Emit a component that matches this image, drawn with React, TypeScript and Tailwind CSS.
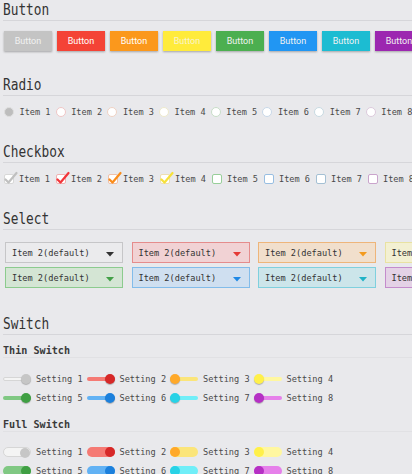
import React from "react";

type Tone = {
  solid: string;
  radioBorder: string;
  boxBorder: string;
  selectBg: string;
  selectBorder: string;
  arrow: string;
  knob: string;
  track: string;
};

const tones: Tone[] = [
  { solid: "bg-[#c4c4c4]", radioBorder: "border-[#d4d4d4]", boxBorder: "border-[#d8d8d8]", selectBg: "bg-[#ebebed]", selectBorder: "border-[#c6c6c8]", arrow: "#333333", knob: "bg-[#c6c6c6]", track: "bg-[#f4f4f4]" },
  { solid: "bg-[#f44336]", radioBorder: "border-[#efc6c6]", boxBorder: "border-[#efb2b2]", selectBg: "bg-[#f1d2d4]", selectBorder: "border-[#e58c8c]", arrow: "#e53935", knob: "bg-[#d62828]", track: "bg-[#f57a74]" },
  { solid: "bg-[#fb981c]", radioBorder: "border-[#efd2c4]", boxBorder: "border-[#efc0a8]", selectBg: "bg-[#f1dfcc]", selectBorder: "border-[#eeb57a]", arrow: "#f39a1e", knob: "bg-[#ffa92a]", track: "bg-[#fbe57a]" },
  { solid: "bg-[#ffeb3b]", radioBorder: "border-[#eeeacc]", boxBorder: "border-[#eedfb0]", selectBg: "bg-[#f3f0d2]", selectBorder: "border-[#e9e2a2]", arrow: "#f2dc2a", knob: "bg-[#fff04a]", track: "bg-[#fff7a0]" },
  { solid: "bg-[#4caf50]", radioBorder: "border-[#c8dec8]", boxBorder: "border-[#98cf9a]", selectBg: "bg-[#d4e5d4]", selectBorder: "border-[#8ccb8e]", arrow: "#43a047", knob: "bg-[#3f9f43]", track: "bg-[#80c883]" },
  { solid: "bg-[#2196f3]", radioBorder: "border-[#c8d8e8]", boxBorder: "border-[#98bee2]", selectBg: "bg-[#cfdff0]", selectBorder: "border-[#82bcea]", arrow: "#1e88e5", knob: "bg-[#1c80dc]", track: "bg-[#62b2f4]" },
  { solid: "bg-[#1cbcd2]", radioBorder: "border-[#c8dae2]", boxBorder: "border-[#a4c0d4]", selectBg: "bg-[#cce5ea]", selectBorder: "border-[#7fd0de]", arrow: "#1fb2c6", knob: "bg-[#28d2e6]", track: "bg-[#70eef8]" },
  { solid: "bg-[#9c27b0]", radioBorder: "border-[#dccadc]", boxBorder: "border-[#caa4cc]", selectBg: "bg-[#e4d2e6]", selectBorder: "border-[#c48ccc]", arrow: "#9c27b0", knob: "bg-[#b530c4]", track: "bg-[#e680ea]" },
];

const checkColors = ["#c0c0c0", "#f2353a", "#fa8c1a", "#f6e13a"];

const mono = "font-['DejaVu_Sans_Mono',monospace]";

const Heading = ({ children }: { children: string }) => (
  <div className="h-5 border-b border-[#d6d6da] box-content leading-5">
    <span className={`${mono} inline-block align-top origin-left scale-x-[0.8] text-[16px] leading-5 text-[#333] whitespace-nowrap`}>
      {children}
    </span>
  </div>
);

const SubHeading = ({ children }: { children: string }) => (
  <div className="h-[12px] border-b border-[#e1e1e4] box-content leading-[12px]">
    <span className={`${mono} inline-block align-top origin-left scale-x-[0.92] text-[11px] font-bold leading-[12px] text-[#3a3a3a] whitespace-nowrap`}>
      {children}
    </span>
  </div>
);

const Label = ({ children, className = "" }: { children: string; className?: string }) => (
  <span className={`${mono} block text-[8.6px] leading-[14px] text-[#4a4a4a] whitespace-nowrap ${className}`}>{children}</span>
);

const ThinSwitch = ({ tone, on }: { tone: Tone; on: boolean }) => (
  <div className="relative w-[28px] h-[14px] shrink-0 flex items-center">
    <div className={`w-full h-[4px] rounded-full ${tone.track} ${tone.track === "bg-[#f4f4f4]" ? "border border-[#d6d6d6]" : ""}`} />
    <div
      className={`absolute top-[2px] w-[10px] h-[10px] rounded-full shadow-[0_1px_1px_rgba(0,0,0,0.25)] ${tone.knob} ${on ? "right-0" : "left-0"}`}
    />
  </div>
);

const FullSwitch = ({ tone, on }: { tone: Tone; on: boolean }) => (
  <div
    className={`relative w-[28px] h-[10px] shrink-0 rounded-full ${tone.track} ${tone.track === "bg-[#f4f4f4]" ? "border border-[#d6d6d6]" : ""}`}
  >
    <div
      className={`absolute top-[0px] w-[10px] h-[10px] rounded-full ${tone.knob} ${on ? "right-0" : "left-0"}`}
    />
  </div>
);

const Select = ({ tone }: { tone: Tone }) => (
  <div className={`w-[118px] h-[21px] shrink-0 border ${tone.selectBg} ${tone.selectBorder} flex items-center pl-[6px] pr-[8px]`}>
    <span className={`${mono} text-[8.6px] leading-[14px] text-[#333] whitespace-nowrap`}>Item 2(default)</span>
    <svg className="ml-auto mt-[3px]" width="8" height="5" viewBox="0 0 8 5">
      <polygon points="0,0 8,0 4,4.5" fill={tone.arrow} />
    </svg>
  </div>
);

export default function App() {
  const buttonText = ["text-[#f2f2f2]", "text-white", "text-white", "text-[#f8f4d0]", "text-[#f2f2f2]", "text-[#f2f2f2]", "text-[#f2f2f2]", "text-[#f2f2f2]"];
  const switchOn = [true, true, false, false, true, true, false, false];

  return (
    <div className="w-[412px] h-[474px] overflow-hidden bg-[#e9e9ec] px-[3px]">
      <div className="w-[600px]">
        <Heading>Button</Heading>
        <div className="mt-[10px] flex gap-[5px] pl-px">
          {tones.map((t, i) => (
            <div
              key={i}
              className={`w-[48px] h-[20px] shrink-0 ${t.solid} flex items-center justify-center shadow-[0_1px_2px_rgba(0,0,0,0.3)]`}
            >
              <span className={`font-['Roboto',sans-serif] text-[9px] leading-[12px] ${buttonText[i]}`}>Button</span>
            </div>
          ))}
        </div>

        <div className="mt-[24px]">
          <Heading>Radio</Heading>
        </div>
        <div className="mt-[9px] flex h-[14px]">
          {tones.map((t, i) => (
            <div key={i} className="flex items-center w-[51.7px] shrink-0">
              <div
                className={`ml-px w-[10px] h-[10px] rounded-full border ${t.radioBorder} ${i === 0 ? "bg-[#bdbdbd] border-[#dedede]" : "bg-white"}`}
              />
              <Label className="ml-[5.5px]">{`Item ${i + 1}`}</Label>
            </div>
          ))}
        </div>

        <div className="mt-[23px]">
          <Heading>Checkbox</Heading>
        </div>
        <div className="mt-[9px] flex h-[14px]">
          {tones.map((t, i) => (
            <div key={i} className="flex items-center w-[52px] shrink-0">
              <div className={`relative ml-px w-[10px] h-[10px] rounded-[2px] border bg-white ${t.boxBorder}`}>
                {i < 4 && (
                  <svg className="absolute left-[-1px] top-[-4px]" width="14" height="14" viewBox="0 0 14 14">
                    <path d="M1.5 8.5 L4.5 11.5 L12.5 2" fill="none" stroke={checkColors[i]} strokeWidth="2.2" strokeLinecap="round" strokeLinejoin="round" />
                  </svg>
                )}
              </div>
              <Label className="ml-[5px]">{`Item ${i + 1}`}</Label>
            </div>
          ))}
        </div>

        <div className="mt-[23px]">
          <Heading>Select</Heading>
        </div>
        <div className="mt-[12px] pl-[2px] flex flex-col gap-[4px]">
          <div className="flex gap-[8.5px]">
            {tones.slice(0, 4).map((t, i) => (
              <Select key={i} tone={t} />
            ))}
          </div>
          <div className="flex gap-[8.5px]">
            {tones.slice(4).map((t, i) => (
              <Select key={i} tone={t} />
            ))}
          </div>
        </div>

        <div className="mt-[26px]">
          <Heading>Switch</Heading>
        </div>
        <div className="mt-[10px]">
          <SubHeading>Thin Switch</SubHeading>
        </div>
        <div className="mt-[14px] flex flex-col gap-[5px]">
          {[0, 4].map((start) => (
            <div key={start} className="flex h-[14px]">
              {tones.slice(start, start + 4).map((t, j) => (
                <div key={j} className="flex items-center w-[83.5px] shrink-0">
                  <ThinSwitch tone={t} on={switchOn[start + j]} />
                  <Label className="ml-[5px]">{`Setting ${start + j + 1}`}</Label>
                </div>
              ))}
            </div>
          ))}
        </div>

        <div className="mt-[14px]">
          <SubHeading>Full Switch</SubHeading>
        </div>
        <div className="mt-[13px] flex flex-col gap-[5px]">
          {[0, 4].map((start) => (
            <div key={start} className="flex h-[14px]">
              {tones.slice(start, start + 4).map((t, j) => (
                <div key={j} className="flex items-center w-[83.5px] shrink-0">
                  <FullSwitch tone={t} on={switchOn[start + j]} />
                  <Label className="ml-[5px]">{`Setting ${start + j + 1}`}</Label>
                </div>
              ))}
            </div>
          ))}
        </div>
      </div>
    </div>
  );
}
